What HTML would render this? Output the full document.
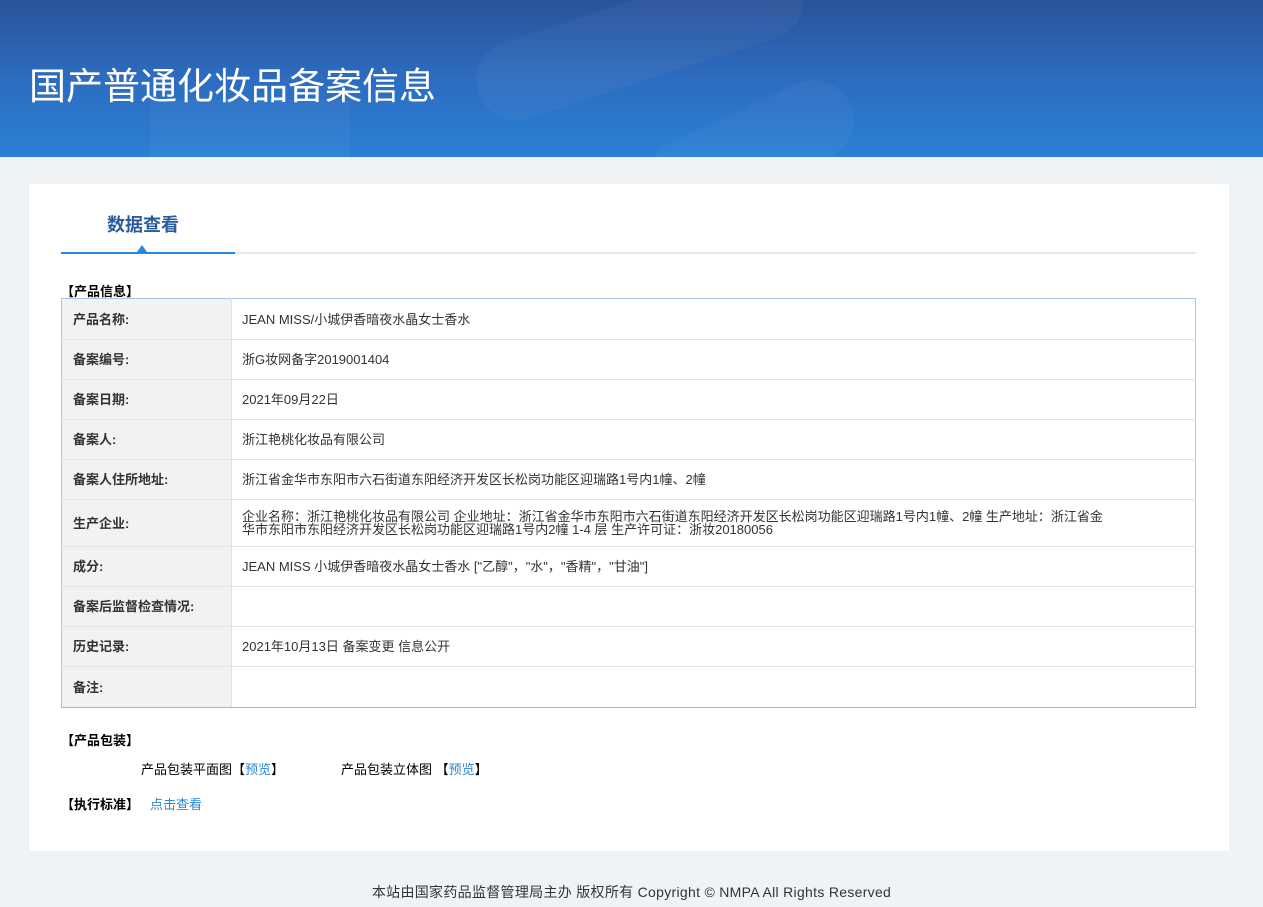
<!DOCTYPE html>
<html><head><meta charset="utf-8"><style>
*{margin:0;padding:0;box-sizing:border-box}
body{width:1263px;height:907px;background:#eff3f6;font-family:"Liberation Sans","Noto Sans CJK SC",sans-serif;font-size:13px;color:#333;position:relative;overflow:hidden}
.hd{position:absolute;left:0;top:0;width:1263px;height:157px;background:linear-gradient(180deg,#2a5399 0%,#2d6cc0 50%,#2a80d6 100%);overflow:hidden}
.hd h1{position:absolute;left:29px;top:58px;font-size:37px;font-weight:normal;color:#fff;font-family:"Noto Sans CJK SC",sans-serif;line-height:50px;letter-spacing:0}
.blob{position:absolute;background:rgba(255,255,255,0.035);border-radius:40px}
.card{position:absolute;left:29px;top:184px;width:1200px;height:667px;background:#fff}
.tab{position:absolute;left:107px;top:211px;font-size:18px;font-weight:bold;color:#2b5a9c;font-family:"Noto Sans CJK SC",sans-serif}
.line{position:absolute;left:61px;top:252px;width:1135px;height:2px;background:#e5e7ea}
.line2{position:absolute;left:61px;top:252px;width:174px;height:2px;background:#2a86d6}
.tri{position:absolute;left:137px;top:245px;width:0;height:0;border-left:5px solid transparent;border-right:5px solid transparent;border-bottom:7px solid #2a86d6}
.sec{position:absolute;font-weight:bold;color:#000;font-size:13px}
table{position:absolute;left:61px;top:298px;width:1135px;border-collapse:collapse;border:1px solid #a9c4e6}
td{border-bottom:1px solid #e4e4e4;height:40px;vertical-align:middle;line-height:13px}
tr:last-child td{border-bottom:1px solid #a9b8c8}
td.l{width:170px;background:#f2f2f2;font-weight:bold;padding-left:11px;border-right:1px solid #e4e4e4;color:#333}
td.v{padding-left:10px;color:#333}
a{color:#2a86d6;text-decoration:none}
.ft{position:absolute;top:882px;left:0;width:1263px;text-align:center;color:#333;font-size:14px;letter-spacing:0.3px}
</style></head><body>
<div class="hd">
<div class="blob" style="left:470px;top:0;width:340px;height:80px;transform:rotate(-18deg)"></div>
<div class="blob" style="left:150px;top:100px;width:200px;height:120px;border-radius:0"></div>
<div class="blob" style="left:640px;top:110px;width:220px;height:80px;transform:rotate(-25deg)"></div>
<h1>国产普通化妆品备案信息</h1></div>
<div class="card"></div>
<div class="tab">数据查看</div>
<div class="line"></div><div class="line2"></div><div class="tri"></div>
<div class="sec" style="left:61px;top:281px">【产品信息】</div>
<table>
<tr><td class="l" style="height:41px">产品名称:</td><td class="v">JEAN MISS/小城伊香暗夜水晶女士香水</td></tr>
<tr><td class="l">备案编号:</td><td class="v">浙G妆网备字2019001404</td></tr>
<tr><td class="l">备案日期:</td><td class="v">2021年09月22日</td></tr>
<tr><td class="l">备案人:</td><td class="v">浙江艳桃化妆品有限公司</td></tr>
<tr><td class="l">备案人住所地址:</td><td class="v">浙江省金华市东阳市六石街道东阳经济开发区长松岗功能区迎瑞路1号内1幢、2幢</td></tr>
<tr><td class="l" style="height:47px">生产企业:</td><td class="v" style="line-height:13px;padding-right:50px">企业名称：浙江艳桃化妆品有限公司 企业地址：浙江省金华市东阳市六石街道东阳经济开发区长松岗功能区迎瑞路1号内1幢、2幢 生产地址：浙江省金<br>华市东阳市东阳经济开发区长松岗功能区迎瑞路1号内2幢 1-4 层 生产许可证：浙妆20180056</td></tr>
<tr><td class="l">成分:</td><td class="v">JEAN MISS 小城伊香暗夜水晶女士香水 ["乙醇"，"水"，"香精"，"甘油"]</td></tr>
<tr><td class="l">备案后监督检查情况:</td><td class="v"></td></tr>
<tr><td class="l">历史记录:</td><td class="v">2021年10月13日 备案变更 信息公开</td></tr>
<tr><td class="l" style="height:41px">备注:</td><td class="v"></td></tr>
</table>
<div class="sec" style="left:61px;top:730px">【产品包装】</div>
<div style="position:absolute;left:141px;top:759px;color:#000">产品包装平面图【<a>预览</a>】</div>
<div style="position:absolute;left:341px;top:759px;color:#000">产品包装立体图 【<a>预览</a>】</div>
<div class="sec" style="left:61px;top:794px">【执行标准】</div>
<a style="position:absolute;left:150px;top:794px">点击查看</a>
<div class="ft">本站由国家药品监督管理局主办 版权所有 Copyright © NMPA All Rights Reserved</div>
</body></html>
